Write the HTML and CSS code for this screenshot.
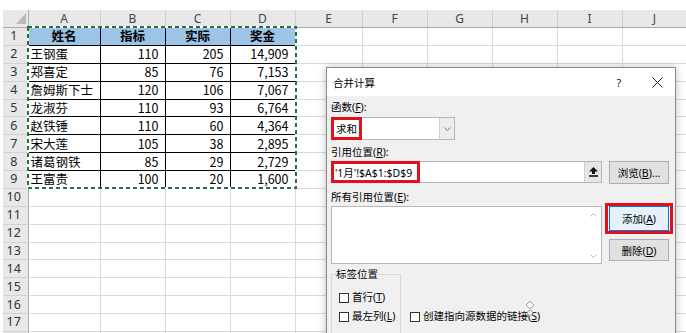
FILE: index.html
```html
<!DOCTYPE html>
<html lang="zh-CN">
<head>
    <meta charset="UTF-8">
    <meta name="viewport" content="width=device-width, initial-scale=1.0">
    <title>合并计算</title>
    <link rel="stylesheet" href="styles.css">
</head>
<body>
    <div class="sheet-wrap">
        <table class="sheet">
            <colgroup>
                <col class="w-head"><col class="w-a"><col class="w-n"><col class="w-n"><col class="w-n">
                <col class="w-e"><col class="w-n"><col class="w-n"><col class="w-n"><col class="w-n"><col class="w-n">
            </colgroup>
            <thead>
                <tr>
                    <th class="corner"><span class="tri"></span></th>
                    <th>A</th><th>B</th><th>C</th><th>D</th><th>E</th>
                    <th>F</th><th>G</th><th>H</th><th>I</th><th>J</th>
                </tr>
            </thead>
            <tbody>
                <tr class="first"><th>1</th><td class="d hd">姓名</td><td class="d hd">指标</td><td class="d hd">实际</td><td class="d hd">奖金</td><td></td><td></td><td></td><td></td><td></td><td></td></tr>
                <tr><th>2</th><td class="d">王钢蛋</td><td class="d num">110</td><td class="d num">205</td><td class="d num">14,909</td><td></td><td></td><td></td><td></td><td></td><td></td></tr>
                <tr><th>3</th><td class="d">郑喜定</td><td class="d num">85</td><td class="d num">76</td><td class="d num">7,153</td><td></td><td></td><td></td><td></td><td></td><td></td></tr>
                <tr><th>4</th><td class="d">詹姆斯下士</td><td class="d num">120</td><td class="d num">106</td><td class="d num">7,067</td><td></td><td></td><td></td><td></td><td></td><td></td></tr>
                <tr><th>5</th><td class="d">龙淑芬</td><td class="d num">110</td><td class="d num">93</td><td class="d num">6,764</td><td></td><td></td><td></td><td></td><td></td><td></td></tr>
                <tr><th>6</th><td class="d">赵铁锤</td><td class="d num">110</td><td class="d num">60</td><td class="d num">4,364</td><td></td><td></td><td></td><td></td><td></td><td></td></tr>
                <tr><th>7</th><td class="d">宋大莲</td><td class="d num">105</td><td class="d num">38</td><td class="d num">2,895</td><td></td><td></td><td></td><td></td><td></td><td></td></tr>
                <tr><th>8</th><td class="d">诸葛钢铁</td><td class="d num">85</td><td class="d num">29</td><td class="d num">2,729</td><td></td><td></td><td></td><td></td><td></td><td></td></tr>
                <tr><th>9</th><td class="d">王富贵</td><td class="d num">100</td><td class="d num">20</td><td class="d num">1,600</td><td></td><td></td><td></td><td></td><td></td><td></td></tr>
                <tr><th>10</th><td></td><td></td><td></td><td></td><td></td><td></td><td></td><td></td><td></td><td></td></tr>
                <tr><th>11</th><td></td><td></td><td></td><td></td><td></td><td></td><td></td><td></td><td></td><td></td></tr>
                <tr><th>12</th><td></td><td></td><td></td><td></td><td></td><td></td><td></td><td></td><td></td><td></td></tr>
                <tr><th>13</th><td></td><td></td><td></td><td></td><td></td><td></td><td></td><td></td><td></td><td></td></tr>
                <tr><th>14</th><td></td><td></td><td></td><td></td><td></td><td></td><td></td><td></td><td></td><td></td></tr>
                <tr><th>15</th><td></td><td></td><td></td><td></td><td></td><td></td><td></td><td></td><td></td><td></td></tr>
                <tr><th>16</th><td></td><td></td><td></td><td></td><td></td><td></td><td></td><td></td><td></td><td></td></tr>
                <tr><th>17</th><td></td><td></td><td></td><td></td><td></td><td></td><td></td><td></td><td></td><td></td></tr>
                <tr><th></th><td></td><td></td><td></td><td></td><td></td><td></td><td></td><td></td><td></td><td></td></tr>
            </tbody>
        </table>

        <!-- copy marquee around A1:D9 -->
        <svg class="marquee" width="270" height="163" viewBox="0 0 270 163">
            <rect x="1" y="1" width="268" height="161" fill="none" stroke="#fff" stroke-width="2"/>
            <rect x="1" y="1" width="268" height="161" fill="none" stroke="#217346" stroke-width="2" stroke-dasharray="4 3"/>
        </svg>
    </div>

    <div class="dialog">
        <div class="dlg-title">
            <span class="dlg-name">合并计算</span>
            <span class="dlg-help">?</span>
            <span class="dlg-close">
                <svg width="11" height="11" viewBox="0 0 11 11"><path d="M0.5 0.5 L10.5 10.5 M10.5 0.5 L0.5 10.5" stroke="#222" stroke-width="1" fill="none"/></svg>
            </span>
        </div>
        <div class="dlg-body">
            <div class="lbl">函数(<u>F</u>):</div>
            <div class="combo">
                <span class="mark">求和</span>
                <span class="combo-btn">
                    <svg width="7" height="4" viewBox="0 0 7 4"><path d="M0.5 0.5 L3.5 3.5 L6.5 0.5" stroke="#777" fill="none"/></svg>
                </span>
            </div>

            <div class="lbl gap-big">引用位置(<u>R</u>):</div>
            <div class="ref-row">
                <div class="ref-input">
                    <span class="mark mark-ref">'1月'!$A$1:$D$9</span>
                    <span class="pick">
                        <svg width="9" height="10" viewBox="0 0 9 10"><path d="M4.5 0 L9 4.5 H6 V7 H3 V4.5 H0 Z" fill="#111"/><rect x="0" y="8.2" width="9" height="1.6" fill="#111"/></svg>
                    </span>
                </div>
                <button class="btn">浏览(<u>B</u>)...</button>
            </div>

            <div class="lbl gap-list">所有引用位置(<u>E</u>):</div>
            <div class="list-row">
                <div class="list">
                    <span class="sb">
                        <svg width="7" height="4" viewBox="0 0 7 4"><path d="M0.5 3.5 L3.5 0.5 L6.5 3.5" stroke="#b8b8b8" fill="none"/></svg>
                        <svg width="7" height="4" viewBox="0 0 7 4"><path d="M0.5 0.5 L3.5 3.5 L6.5 0.5" stroke="#b8b8b8" fill="none"/></svg>
                    </span>
                </div>
                <div class="list-btns">
                    <span class="mark-btn"><button class="btn btn-default">添加(<u>A</u>)</button></span>
                    <button class="btn btn-del">删除(<u>D</u>)</button>
                </div>
            </div>

            <div class="opts">
                <fieldset class="grp">
                    <legend>标签位置</legend>
                    <label class="chk"><span class="box"></span>首行(<u>T</u>)</label>
                    <label class="chk chk-2"><span class="box"></span>最左列(<u>L</u>)</label>
                </fieldset>
                <label class="chk chk-link"><span class="box"></span>创建指向源数据的链接(<u>S</u>)</label>
            </div>
        </div>

        <!-- mouse pointer left over the dialog -->
        <svg class="cursor" width="12" height="17" viewBox="0 0 12 17">
            <path d="M6 1 L10 5 L6 9 L2 5 Z" fill="#fff" stroke="#9a9a9a" stroke-width="1"/>
            <circle cx="6" cy="13" r="2.5" fill="#fff" stroke="#9a9a9a" stroke-width="1"/>
        </svg>
    </div>
</body>
</html>
```

FILE: styles.css
```css
html, body {
    margin: 0;
    padding: 0;
    background: #fff;
    overflow: hidden;
}

body {
    width: 686px;
    height: 333px;
    position: relative;
    font-family: "Noto Sans CJK SC", "Noto Sans", sans-serif;
}

/* ---------- worksheet ---------- */

.sheet-wrap {
    position: relative;
    padding: 10px 0 0 3px;
}

.sheet {
    border-collapse: collapse;
    table-layout: fixed;
    width: 684px;
}

.w-head { width: 25px; }
.w-a { width: 72px; }
.w-n { width: 65px; }
.w-e { width: 67px; }

.sheet th,
.sheet td {
    padding: 0;
    line-height: 14px;
    white-space: nowrap;
    overflow: hidden;
}

.sheet thead th {
    height: 17px;
    background: #e8e8e8;
    border-right: 1px solid #cdcdcd;
    border-bottom: 1px solid #ababab;
    font-family: "Noto Sans", sans-serif;
    font-weight: normal;
    font-size: 12px;
    color: #444;
    text-align: center;
}

.sheet thead th.corner {
    position: relative;
    border-right: 1px solid #ababab;
}

.tri {
    position: absolute;
    right: 2px;
    bottom: 3px;
    width: 0;
    height: 0;
    border-left: 10px solid transparent;
    border-bottom: 11px solid #b9b9b9;
}

.sheet tbody tr {
    height: 17.88px;
}

.sheet tbody th {
    background: #e8e8e8;
    border-right: 1px solid #ababab;
    border-bottom: 1px solid #d2d2d2;
    font-family: "Noto Sans", sans-serif;
    font-weight: normal;
    font-size: 12.5px;
    color: #333;
    text-align: center;
    padding-right: 3px;
}

.sheet td {
    border-right: 1px solid #dadada;
    border-bottom: 1px solid #dadada;
    font-size: 12.5px;
    color: #000;
    padding-left: 2px;
}

.sheet td.d {
    border: 1px solid #000;
}

.sheet td.hd {
    background: #9dc3e6;
    font-weight: bold;
    text-align: center;
    padding-left: 0;
}

.sheet td.num {
    text-align: right;
    padding-right: 6px;
}

.marquee {
    position: absolute;
    left: 27px;
    top: 26px;
}

/* ---------- consolidate dialog ---------- */

.dialog {
    position: absolute;
    left: 326px;
    top: 67px;
    width: 350px;
    height: 290px;
    box-sizing: border-box;
    border: 1px solid #8a8a8a;
    background: #f0f0f0;
    box-shadow: 0 0 8px rgba(0, 0, 0, 0.25);
    font-family: "Noto Sans", "Noto Sans CJK SC", sans-serif;
    font-size: 10.5px;
    color: #000;
}

.dlg-title {
    display: flex;
    align-items: center;
    height: 28px;
    background: #fff;
}

.dlg-name {
    flex: 1;
    padding-left: 6px;
    font-size: 10.5px;
}

.dlg-help {
    width: 20px;
    margin-right: 11px;
    text-align: center;
    font-size: 11px;
    color: #222;
}

.dlg-close {
    width: 35px;
    display: flex;
    justify-content: center;
}

.dlg-body {
    padding: 0 0 0 4px;
}

.lbl {
    height: 13px;
    line-height: 13px;
    margin-top: 5px;
}

.gap-big { margin-top: 6px; }
.gap-list { margin-top: 7px; }

u {
    text-decoration-thickness: 1px;
    text-underline-offset: 1px;
}

.combo {
    display: flex;
    width: 124px;
    height: 23px;
    margin-top: 3px;
    box-sizing: border-box;
    border: 1px solid #b8b8b8;
    background: #fff;
}

.mark {
    display: flex;
    align-items: center;
    margin: -1px 0 -1px -1px;
    padding: 0 2px;
    border: 3px solid #e3101c;
}

.combo-btn {
    margin-left: auto;
    width: 14px;
    display: flex;
    align-items: center;
    justify-content: center;
    background: #ececec;
    border-left: 1px solid #d0d0d0;
}

.ref-row {
    display: flex;
    align-items: flex-start;
    margin-top: 2px;
}

.ref-input {
    display: flex;
    width: 271px;
    height: 22px;
    box-sizing: border-box;
    border: 1px solid #b8b8b8;
    background: #fff;
}

.mark-ref {
    padding: 0 5px 0 1px;
}

.pick {
    margin-left: auto;
    width: 16px;
    display: flex;
    align-items: center;
    justify-content: center;
    background: #e6e6e6;
    border-left: 1px solid #cfcfcf;
}

.btn {
    width: 60px;
    height: 23px;
    padding: 0;
    box-sizing: border-box;
    border: 1px solid #adadad;
    background: #e1e1e1;
    font-family: inherit;
    font-size: 10.5px;
    color: #000;
}

.ref-row .btn {
    margin-left: 7px;
}

.list-row {
    display: flex;
    align-items: flex-start;
    margin-top: 2px;
}

.list {
    display: flex;
    justify-content: flex-end;
    width: 271px;
    height: 58px;
    box-sizing: border-box;
    border: 1px solid #b8b8b8;
    background: #fff;
}

.sb {
    width: 15px;
    display: flex;
    flex-direction: column;
    align-items: center;
    justify-content: space-between;
    padding: 6px 0 5px;
}

.list-btns {
    display: flex;
    flex-direction: column;
    margin-left: 3px;
}

.mark-btn {
    display: block;
    margin-top: -3px;
    padding: 0 1px;
    border: 3px solid #e3101c;
}

.btn-default {
    height: 25px;
    display: block;
    background: #e5f1fb;
    border-color: #0078d7;
}

.btn-del {
    height: 22px;
    margin: 5px 0 0 4px;
}

.opts {
    display: flex;
    align-items: flex-start;
    margin-top: 4px;
}

.grp {
    width: 70px;
    margin: 0;
    padding: 0 0 20px;
    box-sizing: border-box;
    border: 1px solid #d8d8d8;
}

.grp legend {
    margin-left: 4px;
    padding: 0;
    line-height: 13px;
}

.chk {
    display: flex;
    align-items: center;
    height: 13px;
    line-height: 13px;
    white-space: nowrap;
}

.grp .chk {
    margin: 10px 0 0 7px;
}

.grp .chk-2 {
    margin-top: 6px;
}

.box {
    width: 10px;
    height: 10px;
    box-sizing: border-box;
    border: 1px solid #333;
    background: #fff;
    margin-right: 3px;
}

.chk-link {
    margin: 42px 0 0 9px;
}

.cursor {
    position: absolute;
    left: 197px;
    top: 232px;
}
```
